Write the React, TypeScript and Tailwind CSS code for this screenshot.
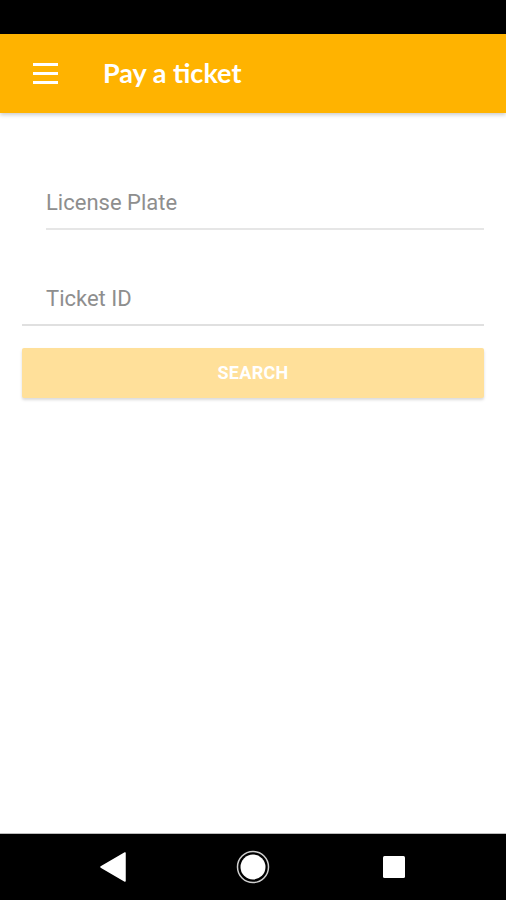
export default function App() {
  return (
    <div className="w-[506px] h-[900px] bg-white flex flex-col relative overflow-hidden" style={{ fontFamily: 'Roboto, "Liberation Sans", sans-serif' }}>
      <div className="h-[34px] bg-black shrink-0" />
      <div className="h-[79px] bg-[#FFB300] shrink-0 flex items-center shadow-[0_2px_4px_rgba(0,0,0,0.2)] relative z-10">
        <div className="w-[25px] ml-[33px] flex flex-col gap-[6px]">
          <div className="h-[3px] bg-white" />
          <div className="h-[3px] bg-white" />
          <div className="h-[3px] bg-white" />
        </div>
        <div className="ml-[45px] text-white text-[27px] font-bold leading-none pb-[3px]" style={{ fontFamily: 'Lato, "Open Sans", sans-serif' }}>
          Pay a ticket
        </div>
      </div>
      <div className="flex-1 flex flex-col px-[22px] pt-[77px]">
        <div className="ml-[24px] mr-0 border-b-2 border-[#e6e6e6] pb-[12px]">
          <div className="text-[22px] leading-[26px] text-[#8e8e8e]">License Plate</div>
        </div>
        <div className="mt-[56px] border-b-2 border-[#e0e0e0] pb-[12px]">
          <div className="ml-[24px] text-[22px] leading-[26px] text-[#8e8e8e]">Ticket ID</div>
        </div>
        <div className="mt-[22px] h-[50px] bg-[#FFE09A] rounded-[2px] shadow-[0_2px_3px_rgba(0,0,0,0.15)] flex items-center justify-center">
          <span className="text-white font-bold text-[18px] tracking-[0.3px] pb-[2px]">SEARCH</span>
        </div>
      </div>
      <div className="h-[67px] bg-black shrink-0 border-t border-[#bdbdbd] flex items-center">
        <svg width="506" height="67" viewBox="0 0 506 67">
          <path d="M125 19 L125 47 L101 33 Z" fill="white" strokeLinejoin="round" stroke="white" strokeWidth="1.5" />
          <circle cx="253" cy="33" r="15.5" fill="none" stroke="#cfcfcf" strokeWidth="1.5" />
          <circle cx="253" cy="33" r="12.5" fill="white" />
          <rect x="383" y="22" width="22" height="22" rx="1.5" fill="white" />
        </svg>
      </div>
    </div>
  );
}
